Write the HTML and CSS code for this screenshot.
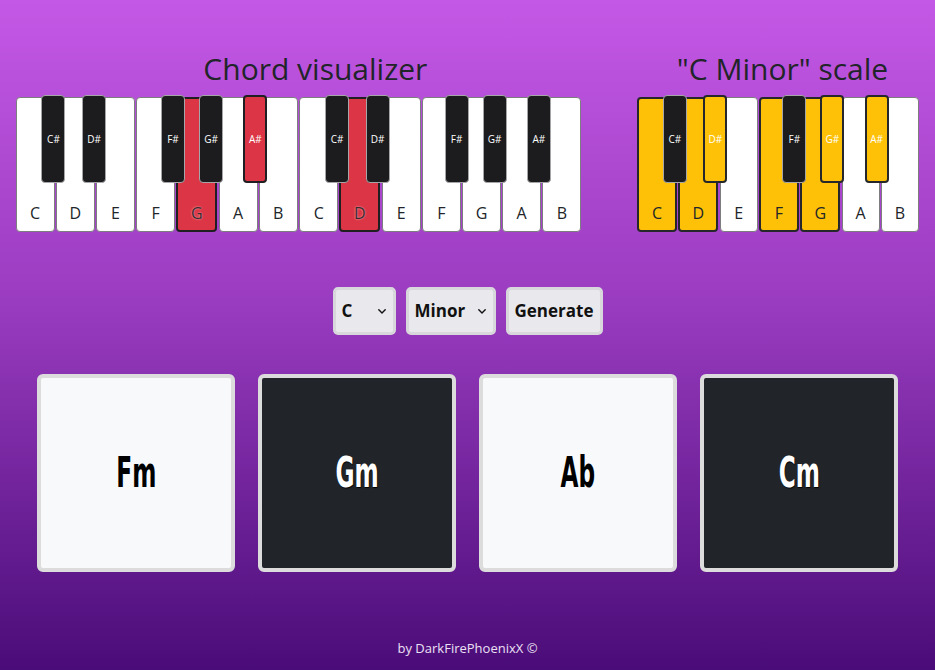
FILE: index.html
```html
<!DOCTYPE html>
<html lang="en">
<head>
<meta charset="utf-8">
<title>Chord visualizer</title>
<link rel="stylesheet" href="styles.css">
</head>
<body>
<div class="top">
  <section class="col col-chord">
    <h2 class="title">Chord visualizer</h2>
    <div class="piano">
      <div class="octave">
        <div class="white"><span>C</span></div>
        <div class="white"><span>D</span></div>
        <div class="white"><span>E</span></div>
        <div class="white"><span>F</span></div>
        <div class="white red"><span>G</span></div>
        <div class="white"><span>A</span></div>
        <div class="white"><span>B</span></div>
        <div class="black cs"><span>C#</span></div>
        <div class="black ds"><span>D#</span></div>
        <div class="black fs"><span>F#</span></div>
        <div class="black gs"><span>G#</span></div>
        <div class="black as red"><span>A#</span></div>
      </div>
      <div class="octave">
        <div class="white"><span>C</span></div>
        <div class="white red"><span>D</span></div>
        <div class="white"><span>E</span></div>
        <div class="white"><span>F</span></div>
        <div class="white"><span>G</span></div>
        <div class="white"><span>A</span></div>
        <div class="white"><span>B</span></div>
        <div class="black cs"><span>C#</span></div>
        <div class="black ds"><span>D#</span></div>
        <div class="black fs"><span>F#</span></div>
        <div class="black gs"><span>G#</span></div>
        <div class="black as"><span>A#</span></div>
      </div>
    </div>
  </section>
  <section class="col col-scale">
    <h2 class="title">"C Minor" scale</h2>
    <div class="piano">
      <div class="octave">
        <div class="white yellow"><span>C</span></div>
        <div class="white yellow"><span>D</span></div>
        <div class="white"><span>E</span></div>
        <div class="white yellow"><span>F</span></div>
        <div class="white yellow"><span>G</span></div>
        <div class="white"><span>A</span></div>
        <div class="white"><span>B</span></div>
        <div class="black cs"><span>C#</span></div>
        <div class="black ds yellow"><span>D#</span></div>
        <div class="black fs"><span>F#</span></div>
        <div class="black gs yellow"><span>G#</span></div>
        <div class="black as yellow"><span>A#</span></div>
      </div>
    </div>
  </section>
</div>

<div class="controls">
  <div class="select-wrap sel-note">
    <select class="ctrl"><option>C</option><option>C#</option><option>D</option></select>
    <svg class="chev" width="8" height="5" viewBox="0 0 8 5"><path d="M0.8 0.8 L4 4 L7.2 0.8" fill="none" stroke="#111" stroke-width="1.4" stroke-linecap="round" stroke-linejoin="round"/></svg>
  </div>
  <div class="select-wrap sel-mode">
    <select class="ctrl"><option>Minor</option><option>Major</option></select>
    <svg class="chev" width="8" height="5" viewBox="0 0 8 5"><path d="M0.8 0.8 L4 4 L7.2 0.8" fill="none" stroke="#111" stroke-width="1.4" stroke-linecap="round" stroke-linejoin="round"/></svg>
  </div>
  <button class="ctrl btn-generate">Generate</button>
</div>

<div class="cards">
  <div class="card light"><span>Fm</span></div>
  <div class="card dark"><span>Gm</span></div>
  <div class="card light"><span>Ab</span></div>
  <div class="card dark"><span>Cm</span></div>
</div>

<footer class="footer">by DarkFirePhoenixX ©</footer>
</body>
</html>
```
FILE: styles.css
```css
html {
  height: 100%;
}
body {
  margin: 0;
  min-height: 100%;
  background: linear-gradient(180deg, #c458e6 0%, #9a3cc0 45%, #4a0c78 100%);
  font-family: "Open Sans", "Noto Sans", sans-serif;
  color: #212529;
}

.top {
  display: flex;
  padding-top: 51px;
}
.col {
  box-sizing: border-box;
}
.col-chord {
  width: 623px;
  padding: 0 8px 0 15.7px;
}
.col-scale {
  width: 312px;
  padding: 0 7px 0 14px;
}
.title {
  margin: 0 0 10px;
  font-size: 30px;
  font-weight: 400;
  line-height: 36px;
  text-align: center;
  color: #212529;
}

.piano {
  display: flex;
  gap: 1.6px;
}
.octave {
  position: relative;
  display: flex;
  gap: 1.3px;
  width: 282px;
  height: 134.5px;
}
.white {
  box-sizing: border-box;
  flex: 1;
  display: flex;
  align-items: flex-end;
  justify-content: center;
  background: #fff;
  border: 1px solid #7d7d80;
  border-radius: 4px;
  padding-bottom: 7px;
  font-size: 16px;
  line-height: 22px;
  color: #212529;
}
.white.red {
  background: #dc3545;
  border: 2px solid #1f1f22;
  padding-bottom: 6px;
}
.white.red span {
  color: #3a2a2e;
  text-shadow: 0 0 2px rgba(255, 210, 215, 0.9);
}
.white.yellow {
  background: #ffc107;
  border: 2.5px solid #25272b;
  padding-bottom: 5.5px;
}

.black {
  position: absolute;
  top: -2.4px;
  box-sizing: border-box;
  width: 24px;
  height: 88.5px;
  display: flex;
  align-items: center;
  justify-content: center;
  background: #1c1c1e;
  border: 1px solid #a6a6a8;
  border-radius: 4px;
  font-size: 10px;
  color: #fff;
}
.black.red {
  background: #dc3545;
  border: 2px solid #1f1f22;
}
.black.yellow {
  background: #ffc107;
  border: 2.5px solid #25272b;
}
.cs { left: 25.8px; }
.ds { left: 66.4px; }
.fs { left: 145.3px; }
.gs { left: 183.4px; }
.as { left: 227.6px; }

.controls {
  display: flex;
  justify-content: center;
  gap: 10px;
  margin-top: 55px;
}
.select-wrap {
  position: relative;
}
.ctrl {
  box-sizing: border-box;
  height: 48px;
  margin: 0;
  background: #e9e9ed;
  border: 3px solid #d7d7dc;
  border-radius: 5px;
  font-family: "Open Sans", "Noto Sans", sans-serif;
  font-size: 17px;
  font-weight: 700;
  color: #111;
  -webkit-appearance: none;
  appearance: none;
  outline: none;
}
select.ctrl {
  padding: 0 0 0 6px;
}
.sel-note select { width: 63px; }
.sel-mode select { width: 90px; }
.chev {
  position: absolute;
  right: 10px;
  top: 22px;
  pointer-events: none;
}
.btn-generate {
  width: 97px;
  padding: 0;
  text-align: center;
}

.cards {
  display: flex;
  justify-content: center;
  gap: 23px;
  margin-top: 39px;
}
.card {
  box-sizing: border-box;
  width: 198px;
  height: 198px;
  border: 4px solid #dcdcdc;
  border-radius: 6px;
  display: flex;
  align-items: center;
  justify-content: center;
}
.card span {
  display: inline-block;
  font-family: "DejaVu Sans Condensed", "Liberation Sans Narrow", "Liberation Sans", sans-serif;
  font-weight: 700;
  font-size: 43px;
  line-height: 1;
  transform: scaleX(0.6);
}
.card.light {
  background: #f8f9fa;
  color: #000;
}
.card.dark {
  background: #212529;
  color: #fff;
}
.card.dark span {
  text-shadow: 1px 1px 1px #000;
}

.footer {
  margin-top: 66px;
  padding-bottom: 12px;
  text-align: center;
  font-size: 13px;
  line-height: 20px;
  color: #ece0f4;
}
```
